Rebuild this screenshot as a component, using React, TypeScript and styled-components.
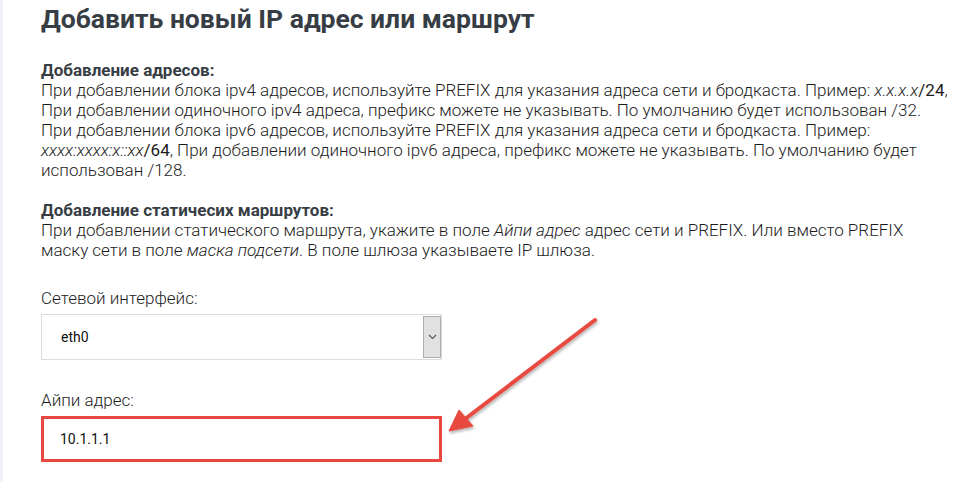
import React from "react";
import styled, { createGlobalStyle } from "styled-components";

const Global = createGlobalStyle`
  html, body {
    margin: 0;
    padding: 0;
    background: #fff;
  }
  body {
    font-family: Roboto, "Liberation Sans", sans-serif;
  }
`;

const Page = styled.div`
  position: relative;
  width: 960px;
  height: 482px;
  overflow: hidden;
  background: #fff;
  border-left: 3px solid #eef2f8;
  box-sizing: border-box;
  padding: 0 0 0 38px;
`;

const Title = styled.h1`
  margin: 0;
  padding-top: 1px;
  font-size: 26.5px;
  line-height: 36px;
  font-weight: 700;
  color: #373d44;
`;

const Help = styled.div`
  margin-top: 23px;
  font-size: 17px;
  line-height: 20px;
  font-weight: 300;
  color: #1c1c1c;
  width: 919px;
  white-space: nowrap;
`;

const Block = styled.p`
  margin: 0 0 20px;
`;

const BlockTitle = styled.strong`
  display: block;
  font-weight: 700;
  color: #373d44;
`;

const Field = styled.div<{ $top: number }>`
  margin-top: ${(p) => p.$top}px;
  width: 401px;
`;

const Label = styled.div`
  font-size: 17px;
  line-height: 20px;
  font-weight: 300;
  color: #1c1c1c;
  margin-bottom: 6px;
`;

const Select = styled.div`
  display: flex;
  height: 46px;
  border: 1px solid #dcdcdc;
  box-sizing: border-box;
  background: #fff;
`;

const SelectValue = styled.div`
  flex: 1;
  display: flex;
  align-items: center;
  padding-left: 19px;
  font-size: 14px;
  color: #111;
`;

const SelectButton = styled.div`
  width: 16px;
  margin: 1px 0;
  background: #e1e1e1;
  border: 1px solid #adadad;
  display: flex;
  align-items: center;
  justify-content: center;
`;

const Input = styled.div`
  height: 46px;
  border: 3px solid #e8483f;
  box-sizing: border-box;
  display: flex;
  align-items: center;
  padding-left: 16px;
  font-size: 14px;
  color: #111;
`;

const Arrow = styled.svg`
  position: absolute;
  left: 0;
  top: 0;
  pointer-events: none;
`;

export default function App() {
  return (
    <Page>
      <Global />
      <Title>Добавить новый IP адрес или маршрут</Title>
      <Help>
        <Block>
          <BlockTitle>Добавление адресов:</BlockTitle>
          При добавлении блока ipv4 адресов, используйте PREFIX для указания адреса сети и бродкаста. Пример:{" "}
          <i>x.x.x.x</i>
          <b>/24</b>,
          <br />
          При добавлении одиночного ipv4 адреса, префикс можете не указывать. По умолчанию будет использован /32.
          <br />
          При добавлении блока ipv6 адресов, используйте PREFIX для указания адреса сети и бродкаста. Пример:
          <br />
          <i>xxxx:xxxx:x::xx</i>
          <b>/64</b>, При добавлении одиночного ipv6 адреса, префикс можете не указывать. По умолчанию будет
          <br />
          использован /128.
        </Block>
        <Block>
          <BlockTitle>Добавление статичесих маршрутов:</BlockTitle>
          При добавлении статического маршрута, укажите в поле <i>Айпи адрес</i> адрес сети и PREFIX. Или вместо
          PREFIX
          <br />
          маску сети в поле <i>маска подсети</i>. В поле шлюза указываете IP шлюза.
        </Block>
      </Help>
      <Field $top={28}>
        <Label>Сетевой интерфейс:</Label>
        <Select>
          <SelectValue>eth0</SelectValue>
          <SelectButton>
            <svg width="9" height="6" viewBox="0 0 9 6">
              <path d="M1 1l3.5 3.5L8 1" fill="none" stroke="#555" strokeWidth="1.1" />
            </svg>
          </SelectButton>
        </Select>
      </Field>
      <Field $top={30}>
        <Label>Айпи адрес:</Label>
        <Input>10.1.1.1</Input>
      </Field>
      <Arrow width="960" height="482" viewBox="0 0 960 482">
        <defs>
          <filter id="sh" x="-20%" y="-20%" width="140%" height="140%">
            <feDropShadow dx="1" dy="2" stdDeviation="1.5" floodColor="#000" floodOpacity="0.3" />
          </filter>
        </defs>
        <g filter="url(#sh)" fill="#e8483f" stroke="#e8483f">
          <line x1="592" y1="320" x2="462" y2="419" strokeWidth="4" strokeLinecap="round" />
          <polygon points="446,431 456,410 470,426" strokeWidth="1" strokeLinejoin="round" />
        </g>
      </Arrow>
    </Page>
  );
}
